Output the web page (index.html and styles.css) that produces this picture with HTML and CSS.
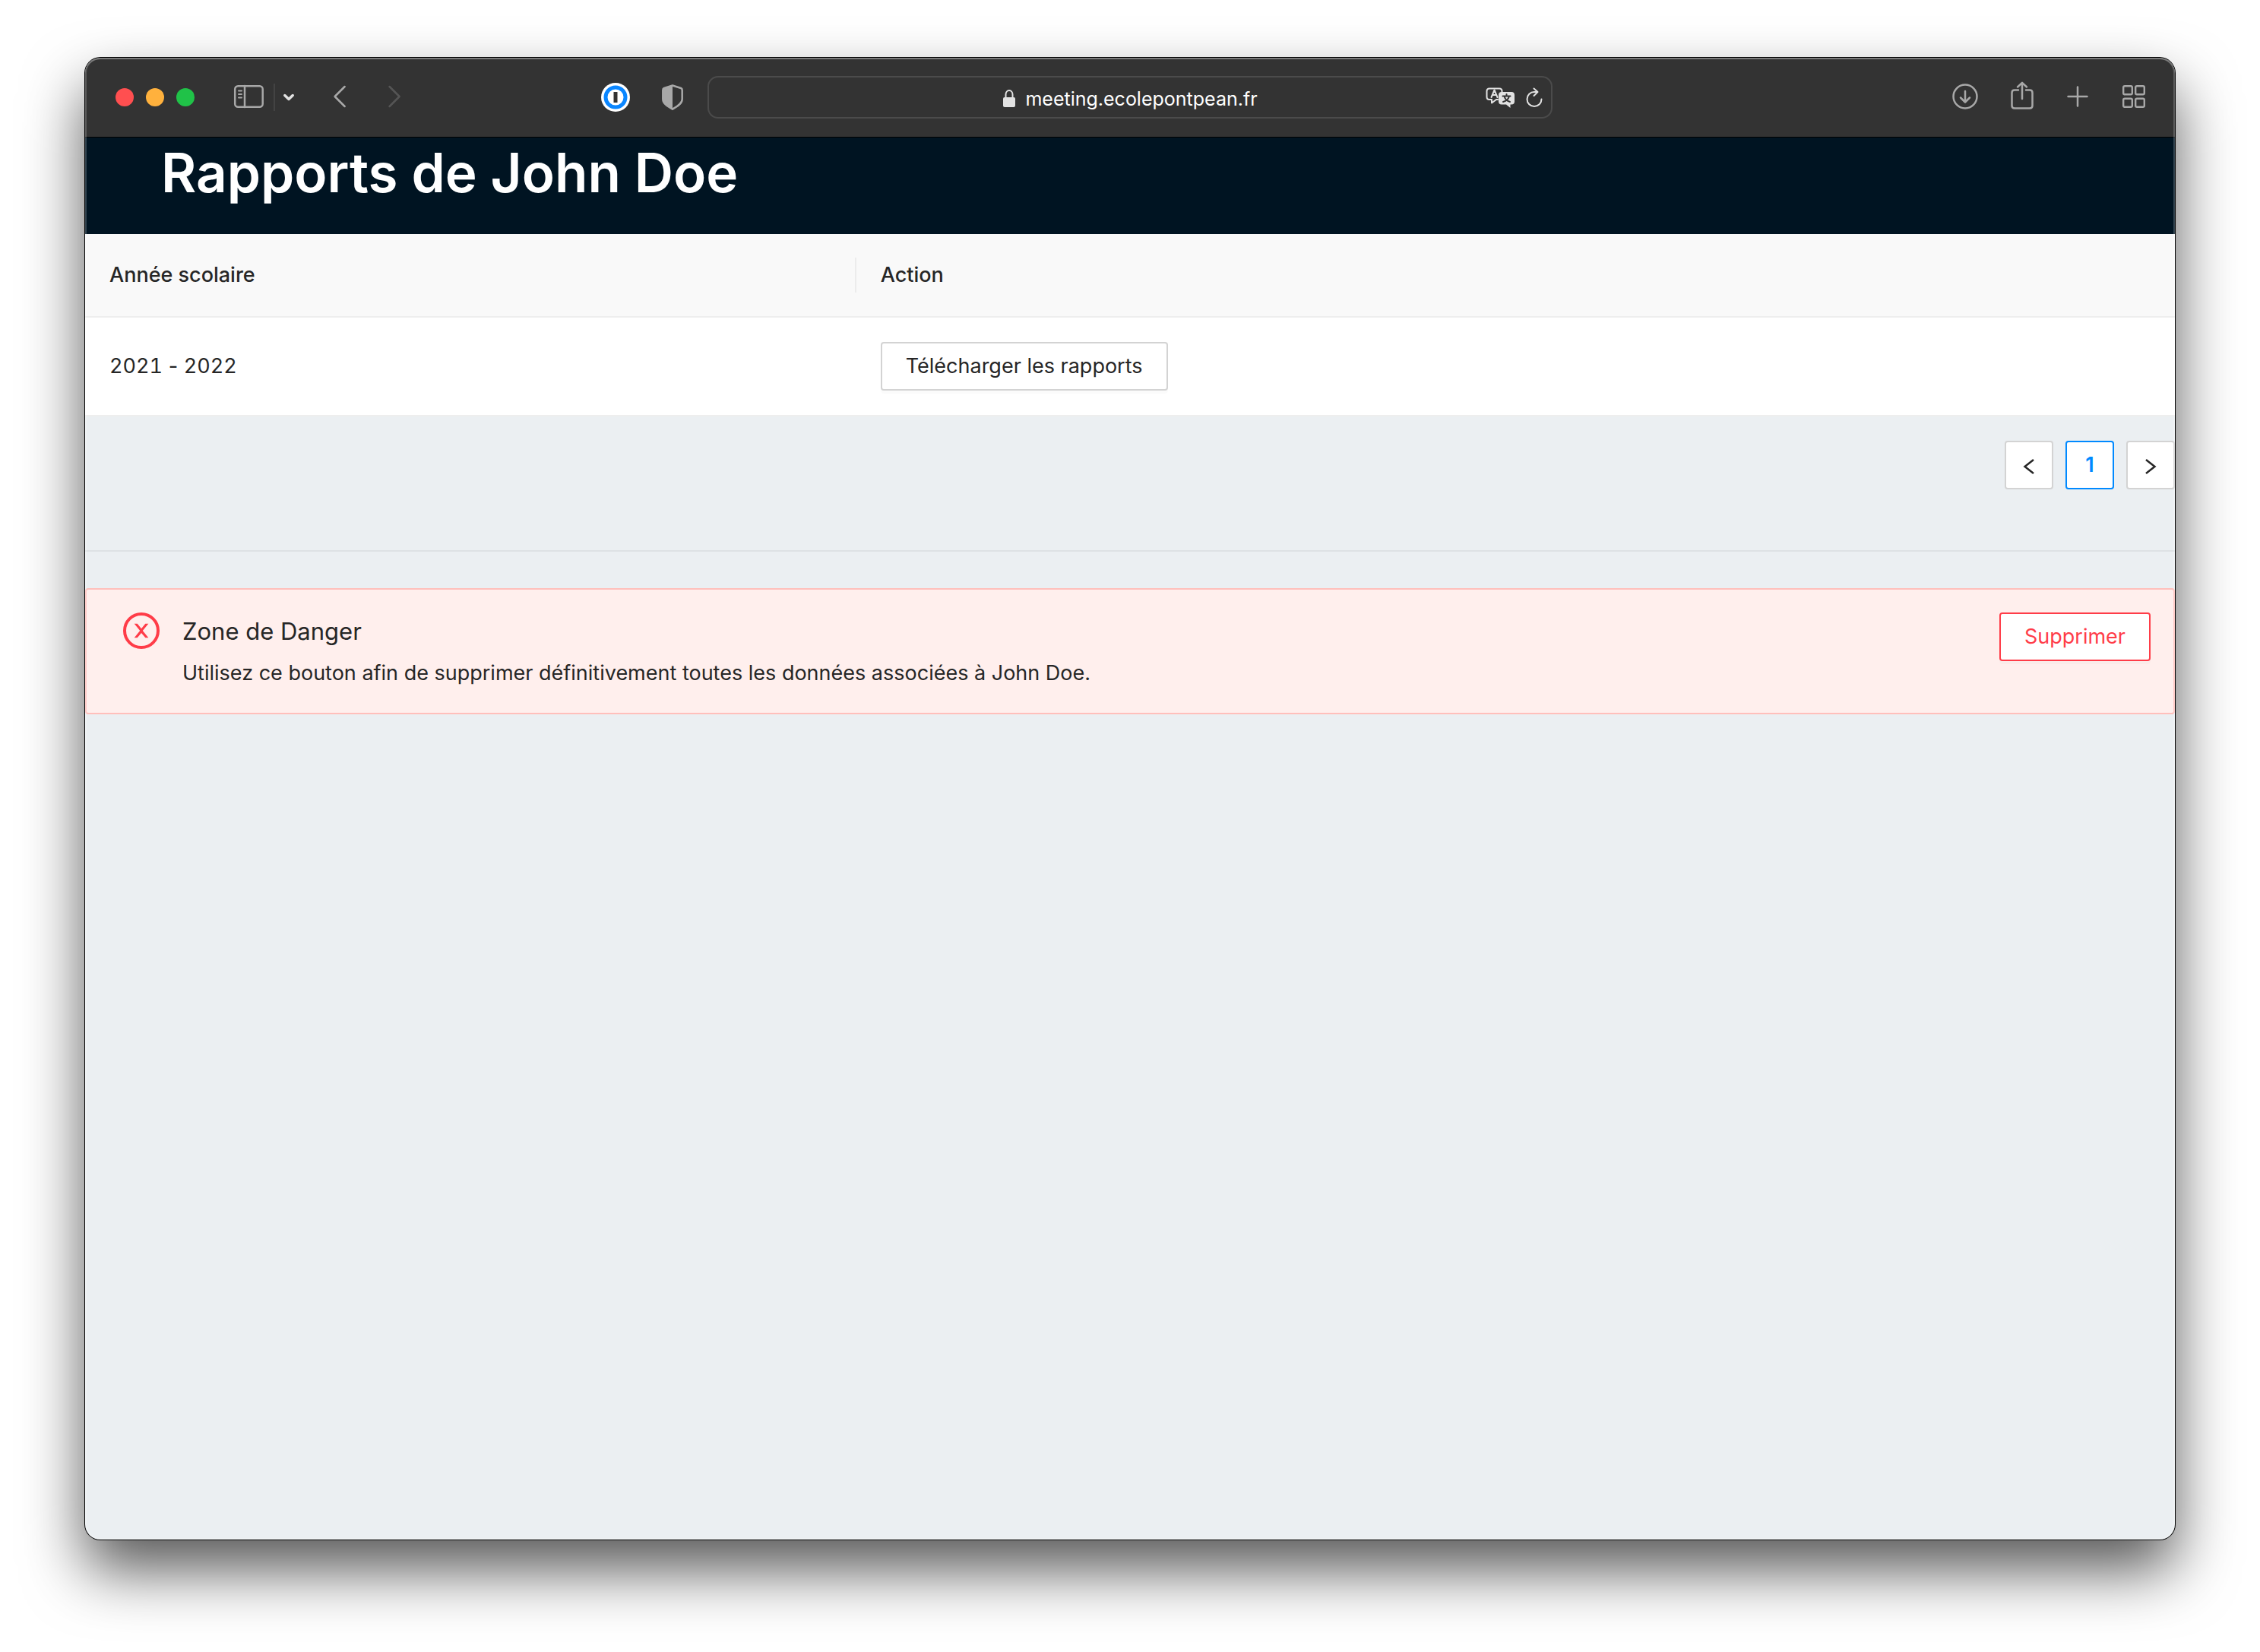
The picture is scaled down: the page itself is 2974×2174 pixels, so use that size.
FILE: index.html
```html
<!DOCTYPE html>
<html lang="fr">
<head>
<meta charset="utf-8">
<title>Rapports de John Doe</title>
<link rel="stylesheet" href="styles.css">
</head>
<body>
<div class="window">
  <div class="toolbar">
    <div class="toolbar-side">
      <div class="lights">
        <span class="light light-close"></span>
        <span class="light light-min"></span>
        <span class="light light-max"></span>
      </div>
      <div class="nav-tools">
        <button class="tool" aria-label="Barre latérale"><svg width="40" height="40" viewBox="0 0 40 40"><rect x="1.200" y="5.200" width="36.500" height="27.500" rx="4"/><path d="M14 5v28"/><path class="thin" d="M6 11.500h4M6 16h4M6 20.500h4"/></svg></button>
        <span class="separator"></span>
        <button class="tool" aria-label="Groupes d’onglets"><svg class="bright" width="16" height="40" viewBox="0 0 16 40"><path d="M.8 17.500L6 22.500l5.200-5"/></svg></button>
      </div>
      <div class="history-tools">
        <button class="tool" aria-label="Retour"><svg width="20" height="40" viewBox="0 0 20 40"><path d="M17.600 6L4.600 19l13 13"/></svg></button>
        <button class="tool" aria-label="Suivant" disabled><svg class="dim" width="20" height="40" viewBox="0 0 20 40"><path d="M4.600 6l13 13-13 13"/></svg></button>
      </div>
      <div class="extensions">
        <button class="tool" aria-label="1Password"><svg width="38" height="40" viewBox="0 0 38 40"><circle cx="19" cy="20" r="19" fill="#fff" stroke="none"/><circle cx="19" cy="20" r="13" fill="#fff" stroke="#0a86ff" stroke-width="5"/><path d="M19 13v14" stroke="#333" stroke-width="5" stroke-linecap="butt"/></svg></button>
        <button class="tool" aria-label="Confidentialité"><svg width="28" height="40" viewBox="0 0 28 40"><path d="M14 4.500L25 8q1.700.6 1.700 2.500v12c0 6-7 10-12.700 13.200C8.300 32.500 1.300 28.500 1.300 22.500v-12Q1.300 8.600 3 8z" stroke-width="2.500"/><path d="M14 4L3 7.500Q1 8.300 1 10.500v12C1 29 8 32.500 14 36z" fill="#a8a8a8" stroke="none"/></svg></button>
      </div>
    </div>
    <div class="address">
      <span></span>
      <span class="host"><svg width="18" height="28" viewBox="0 0 18 28"><path d="M4.500 13V8.500a4.500 5.500 0 0 1 9 0V13" fill="none" stroke="#e2e2e2" stroke-width="2"/><rect x="1" y="12" width="16" height="13" rx="2" fill="#e2e2e2"/></svg>meeting.ecolepontpean.fr</span>
      <span class="address-tools">
        <button class="tool" aria-label="Traduire"><svg class="bright" width="38" height="40" viewBox="0 0 38 40"><path stroke-width="2" d="M16 23h-2l-6 4.500V23H5q-3.500 0-3.500-3.500V12Q1.500 8.500 5 8.500h13q3.500 0 3.500 3.500v1"/><path stroke-width="2" d="M7.500 20l4-9.500 4 9.500M9 17h5"/><path fill="#e2e2e2" stroke="none" d="M21 13h13q4 0 4 4v8.500q0 4-4 4h-1.500V34L27 29.500h-6q-4 0-4-4V17q0-4 4-4z"/><path stroke="#333" stroke-width="2" d="M22.500 18.500h10M27.500 16v2M31 18.500c-1 4-4 6.500-8 7.500M24.500 18.500c1 4 3.500 6.500 7.500 7.500"/></svg></button>
        <button class="tool" aria-label="Recharger"><svg class="bright" width="24" height="40" viewBox="0 0 24 40"><path stroke-width="2" d="M21.500 22.500a9.500 9.500 0 1 1-9.500-9.500h4M11.500 8.500l5 4.500-5 5"/></svg></button>
      </span>
    </div>
    <div class="toolbar-side toolbar-end">
      <button class="tool" aria-label="Téléchargements"><svg width="36" height="40" viewBox="0 0 36 40"><circle cx="20" cy="19" r="15.500"/><path d="M20 12v14M14 20.500l6 6 6-6"/></svg></button>
      <button class="tool" aria-label="Partager"><svg width="30" height="40" viewBox="0 0 30 40"><path d="M10 10.500H5q-3.500 0-3.500 3.500v17q0 3.500 3.500 3.500h20q3.500 0 3.500-3.500V14q0-3.500-3.500-3.500h-5M15 22V1M9 6.500L15 .8l6 5.700"/></svg></button>
      <button class="tool" aria-label="Nouvel onglet"><svg width="28" height="40" viewBox="0 0 28 40"><path d="M14 6.500v25M1.500 19h25"/></svg></button>
      <button class="tool" aria-label="Vue d’ensemble"><svg width="30" height="40" viewBox="0 0 30 40"><path d="M4 5.200h8q1.800 0 1.800 1.800v7.500q0 1.800-1.800 1.800H4q-1.800 0-1.800-1.800V7q0-1.800 1.800-1.800zM20 5.200h8q1.800 0 1.800 1.800v7.500q0 1.800-1.800 1.800h-8q-1.800 0-1.800-1.800V7q0-1.800 1.800-1.800zM4 21.700h8q1.800 0 1.800 1.800V31q0 1.800-1.800 1.800H4q-1.800 0-1.800-1.800v-7.500q0-1.800 1.800-1.800zM20 21.700h8q1.800 0 1.800 1.800V31q0 1.800-1.800 1.800h-8q-1.800 0-1.800-1.800v-7.500q0-1.800 1.800-1.800z" stroke-width="2.400"/></svg></button>
    </div>
  </div>

  <header class="page-header"><h1>Rapports de John Doe</h1></header>

  <main>
    <table class="reports">
      <colgroup><col class="col-year"><col></colgroup>
      <thead><tr><th scope="col">Année scolaire</th><th scope="col">Action</th></tr></thead>
      <tbody><tr><td><span class="year">2021</span> - <span class="year">2022</span></td><td><button class="btn">Télécharger les rapports</button></td></tr></tbody>
    </table>

    <nav class="pagination" aria-label="Pagination">
      <button class="page" aria-label="Page précédente"><svg width="24" height="28" viewBox="0 0 24 28"><path d="M18 7L6.500 16l11.500 9"/></svg></button>
      <button class="page page-current" aria-current="page">1</button>
      <button class="page" aria-label="Page suivante"><svg width="24" height="28" viewBox="0 0 24 28"><path d="M6 7l11.500 9L6 25"/></svg></button>
    </nav>

    <hr class="divider">

    <section class="alert">
      <svg class="alert-icon" width="48" height="48" viewBox="0 0 48 48"><circle cx="24" cy="24" r="22"/><path d="M14.700 14.800h4L24 21.200l5.300-6.400h4L25.800 24l7.500 9.300h-4L24 26.900l-5.300 6.400h-4l7.500-9.300z"/></svg>
      <div class="alert-body">
        <h2>Zone de Danger</h2>
        <p>Utilisez ce bouton afin de supprimer définitivement toutes les données associées à John Doe.</p>
      </div>
      <button class="btn btn-danger">Supprimer</button>
    </section>
  </main>
</div>
</body>
</html>
```
FILE: styles.css
```css
* {
  box-sizing: border-box;
}

body {
  margin: 0;
  min-height: 100vh;
  display: flex;
  padding: 76px 112px 148px;
  background: #fff;
  color: #262626;
  font: 27px/44px Inter, "Liberation Sans", sans-serif;
}

button {
  font: inherit;
  color: inherit;
}

h1, h2, p {
  margin: 0;
}

/* Browser window */
.window {
  position: relative;
  flex: 1;
  min-width: 0;
  border-radius: 20px;
  overflow: hidden;
  background: #ebeff2;
  box-shadow: 0 0 0 1px #000, 0 40px 80px rgba(0, 0, 0, .66);
}

.window::after {
  content: "";
  position: absolute;
  inset: 0;
  border-radius: 20px;
  box-shadow: inset 0 0 0 2px rgba(255, 255, 255, .2), inset 0 2px 0 rgba(255, 255, 255, .2);
  pointer-events: none;
}

.toolbar {
  display: grid;
  grid-template-columns: 1fr minmax(0, 1112px) 1fr;
  align-items: center;
  height: 105px;
  background: #333;
  border-bottom: 1px solid #000;
}

.toolbar-side {
  display: flex;
  align-items: center;
  padding: 0 32px 0 40px;
}

.toolbar-end {
  justify-content: flex-end;
  gap: 44px;
  padding: 0 40px;
}

.lights {
  display: flex;
  gap: 16px;
}

.light {
  width: 24px;
  height: 24px;
  border-radius: 50%;
}

.light-close { background: #ff4f50; }
.light-min { background: #ffb13d; }
.light-max { background: #20c248; }

.nav-tools {
  display: flex;
  align-items: center;
  gap: 12px;
  margin-left: 52px;
}

.separator {
  width: 2px;
  height: 36px;
  background: #434343;
}

.history-tools {
  display: flex;
  gap: 52px;
  margin-left: 46px;
}

.extensions {
  display: flex;
  gap: 42px;
  margin-left: auto;
}

.tool {
  display: flex;
  padding: 0;
  border: 0;
  background: none;
}

.tool svg {
  display: block;
  overflow: visible;
  fill: none;
  stroke: #a8a8a8;
  stroke-width: 2.5;
  stroke-linecap: round;
  stroke-linejoin: round;
}

.tool .thin { stroke-width: 2; }
.tool .bright { stroke: #e2e2e2; }
.tool .dim { stroke: #555; }
.nav-tools .bright { stroke-width: 3.5; }

.address {
  display: grid;
  grid-template-columns: 1fr auto 1fr;
  align-items: center;
  height: 56px;
  padding: 0 10px;
  border: 2px solid #4b4b4b;
  border-radius: 14px;
  color: #fff;
  font-size: 25px;
}

.host {
  display: flex;
  align-items: center;
  gap: 12px;
  padding-top: 4px;
}

.address-tools {
  display: flex;
  justify-content: flex-end;
  gap: 14px;
}

/* Page */
.page-header {
  padding: 0 100px 35px;
  background: #001422;
}

.page-header h1 {
  color: #fff;
  font-size: 71px;
  line-height: 92px;
  font-weight: 600;
}

.reports {
  width: 100%;
  table-layout: fixed;
  border-collapse: separate;
  border-spacing: 0;
  background: #fff;
}

.col-year {
  width: 36.9%;
}

.reports th,
.reports td {
  padding: 32px;
  border-bottom: 2px solid #eee;
  text-align: left;
}

.reports th {
  background: #f9f9f9;
  font-weight: 500;
}

.reports th:first-child {
  background: linear-gradient(#ececec, #ececec) right center / 2px 46px no-repeat #f9f9f9;
}

.year {
  font-variant-numeric: tabular-nums;
}

.btn {
  display: block;
  height: 64px;
  padding: 0 31px;
  border: 2px solid #d3d3d3;
  border-radius: 4px;
  background: #fff;
  box-shadow: 0 4px 0 rgba(0, 0, 0, .016);
}

.btn-danger {
  border-color: #ff3c48;
  color: #ff3c48;
}

.pagination {
  display: flex;
  justify-content: flex-end;
  gap: 16px;
  padding: 32px 0;
}

.page {
  display: flex;
  align-items: center;
  justify-content: center;
  width: 64px;
  height: 64px;
  padding: 0;
  border: 2px solid #d3d3d3;
  border-radius: 4px;
  background: #fff;
}

.page svg {
  fill: none;
  stroke: #262626;
  stroke-width: 2.5;
}

.page-current {
  border-color: #0089ff;
  color: #0089ff;
  font-weight: 600;
}

.divider {
  height: 2px;
  margin: 48px 0;
  border: 0;
  background: #dde1e4;
}

.alert {
  display: flex;
  align-items: flex-start;
  padding: 30px 30px 30px 48px;
  border: 2px solid #ffbfbb;
  border-radius: 4px;
  background: #ffefed;
}

.alert-icon {
  flex: none;
  margin-right: 30px;
  fill: #ff3c48;
}

.alert-icon circle {
  fill: none;
  stroke: #ff3c48;
  stroke-width: 4;
}

.alert-body {
  flex: 1;
}

.alert h2 {
  margin-bottom: 8px;
  font-size: 31px;
  line-height: 50px;
  font-weight: 400;
}
```
